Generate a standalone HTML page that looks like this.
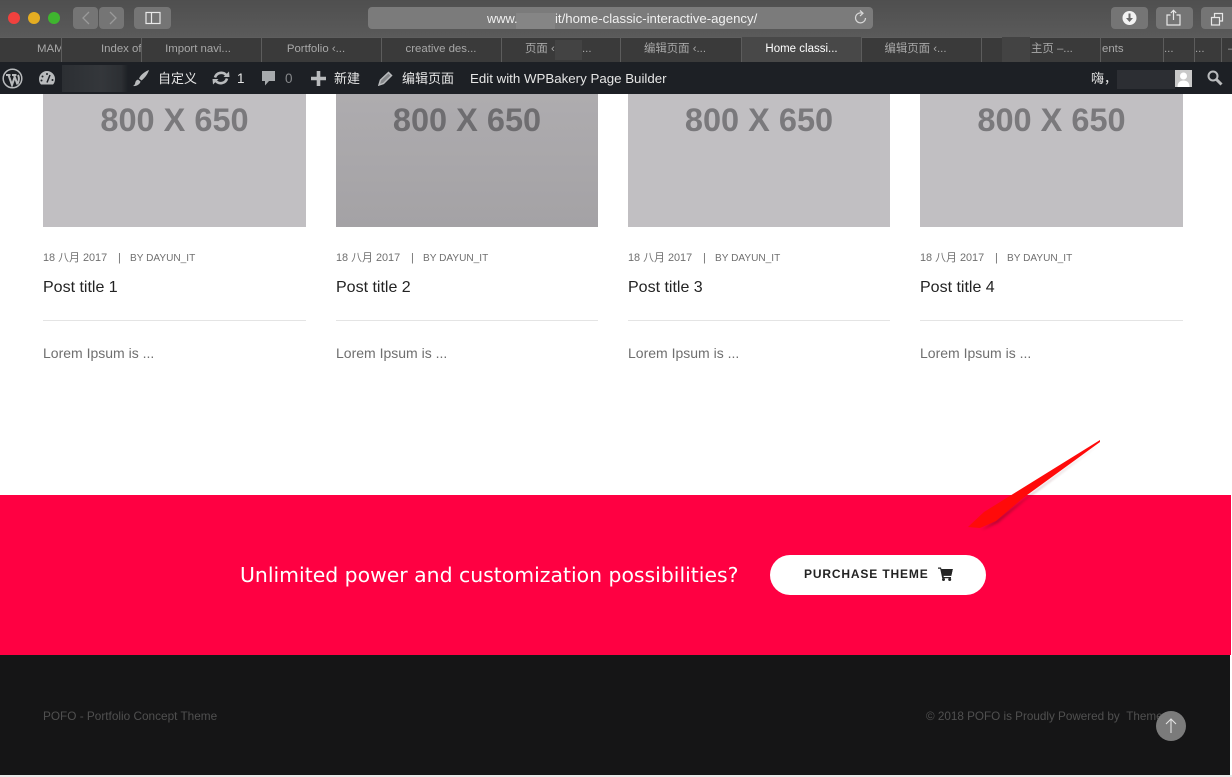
<!DOCTYPE html>
<html lang="zh"><head><meta charset="utf-8"><title>Home Classic Interactive Agency</title>
<style>
*{box-sizing:border-box}
html,body{margin:0;padding:0}
body{width:1232px;height:777px;position:relative;overflow:hidden;background:#fff;font-family:"Liberation Sans","Noto Sans CJK SC",sans-serif}
.a{position:absolute;white-space:nowrap}
.btn{position:absolute;top:7px;height:22px;background:#757575;border-radius:4px}
.tab{position:absolute;top:37px;height:25px;line-height:25px;text-align:center;font-size:11.400px;color:#a8a8a8;border-left:1px solid #5c5c5c;overflow:hidden;white-space:nowrap}
.wp{position:absolute;top:63px;height:32px;line-height:32px;font-size:13px;color:#e6e6e6;white-space:nowrap}
.img{position:absolute;top:94px;width:262px;height:133px;background:#c1bfc2;color:#7a797c;text-align:center;font-weight:bold;font-size:32.500px;line-height:53px;font-family:"Liberation Sans",sans-serif}
.meta{position:absolute;top:251px;font-size:10.900px;color:#6f6f6f;line-height:14px;white-space:nowrap}
.meta span{display:inline-block}
.meta .d{width:75px}
.meta .s{width:12px}
.meta .b{font-size:10.100px}
.title{position:absolute;top:278px;font-size:16px;color:#232323;line-height:20px;white-space:nowrap}
.rule{position:absolute;top:320px;width:262px;height:1px;background:#e4e4e4}
.txt{position:absolute;top:344px;font-size:14px;color:#6f6f6f;line-height:18px;white-space:nowrap}
</style></head><body>

<div class="a" style="left:0;top:0;width:1232px;height:37px;background:linear-gradient(#4f4f4f,#5a5a5a)"></div>
<div class="a" style="left:8px;top:12px;width:12px;height:12px;border-radius:50%;background:#f0413e"></div>
<div class="a" style="left:28px;top:12px;width:12px;height:12px;border-radius:50%;background:#e5ad22"></div>
<div class="a" style="left:48px;top:12px;width:12px;height:12px;border-radius:50%;background:#3fb52f"></div>
<div class="btn" style="left:73px;width:25px"></div>
<div class="btn" style="left:99px;width:25px"></div>
<div class="btn" style="left:134px;width:37px"></div>
<svg class="a" style="left:73px;top:7px" width="100" height="22" fill="none" stroke="#9a9a9a" stroke-width="1.300">
<path d="M16 5 10 11 16 17M37 5 43 11 37 17"/>
<rect x="73" y="5.500" width="14" height="11" stroke="#e8e8e8" stroke-width="1.200"/><path d="M78.500 5.500V16.500" stroke="#e8e8e8" stroke-width="1.200"/>
</svg>
<div class="btn" style="left:368px;width:505px;background:#7b7b7b"></div>
<div class="a" style="left:516px;top:13px;width:39px;height:16px;background:#858585"></div>
<div class="a" style="left:487px;top:11px;font-size:12.800px;line-height:16px;color:#f0f0f0">www.</div>
<div class="a" style="left:555px;top:11px;font-size:13.200px;line-height:16px;color:#f0f0f0">it/home-classic-interactive-agency/</div>
<svg class="a" style="left:853px;top:10px" width="15" height="16" fill="none" stroke="#d8d8d8" stroke-width="1.200"><path d="M9.500 3.300A5 5 0 1 0 12.500 8"/><path d="M7 .5 10 3.300 7 6" /></svg>
<div class="btn" style="left:1111px;width:37px"></div>
<div class="btn" style="left:1156px;width:37px"></div>
<div class="btn" style="left:1201px;width:37px"></div>
<svg class="a" style="left:1111px;top:7px" width="121" height="22">
<circle cx="18.500" cy="11" r="7" fill="#f2f2f2"/><path d="M17.500 6.500h2V11h2.500l-3.500 4-3.500-4h2.500z" fill="#6a6a6a"/>
<path d="M59.500 8H56V18H69V8H65.500M62.500 13V3.500M59.800 6 62.500 3.300 65.200 6" fill="none" stroke="#e8e8e8" stroke-width="1.200"/>
<path d="M100.500 10.500H108.500V18H100.500ZM103.500 10V6.500H111.500V14H109" fill="none" stroke="#e8e8e8" stroke-width="1.200"/>
</svg>

<div class="a" style="left:0;top:37px;width:1232px;height:25px;background:#3a3a3a;border-top:1px solid #5e5e5e"></div>
<div class="tab" style="left:0;width:61px;border:0;text-align:left;padding-left:37px">MAM</div>
<div class="tab" style="left:61px;width:80px;text-align:left;padding-left:39px">Index of</div>
<div class="tab" style="left:141px;width:120px;padding-right:7px">Import navi...</div>
<div class="tab" style="left:261px;width:120px;padding-right:11px">Portfolio ‹...</div>
<div class="tab" style="left:381px;width:120px;padding-right:1px">creative des...</div>
<div class="tab" style="left:501px;width:119px;text-align:left;padding-left:23px">页面 ‹</div>
<div class="a" style="left:555px;top:40px;width:27px;height:20px;background:#434343"></div>
<div class="tab" style="left:582px;width:20px;border:0;background:none;text-align:left">...</div>
<div class="tab" style="left:620px;width:121px;padding-right:12px">编辑页面 ‹...</div>
<div class="tab" style="left:741px;width:120px;background:#484848;color:#fff;font-size:11.500px">Home classi...</div>
<div class="tab" style="left:861px;width:120px;padding-right:12px">编辑页面 ‹...</div>
<div class="tab" style="left:981px;width:119px;text-align:left;padding-left:49px">主页 –...</div>
<div class="a" style="left:1002px;top:37px;width:28px;height:26px;background:#434343"></div>
<div class="tab" style="left:1100px;width:63px;text-align:left;padding-left:1px">ents</div>
<div class="tab" style="left:1163px;width:31px;text-align:left">...</div>
<div class="tab" style="left:1194px;width:28px;text-align:left">...</div>
<div class="tab" style="left:1221px;width:11px;text-align:left;padding-left:6px">–</div>

<div class="a" style="left:0;top:62px;width:1232px;height:32px;background:#1d2025"></div>
<svg class="a" style="left:2px;top:68px" width="21" height="21" fill="none" stroke="#b9bbbd"><circle cx="10.500" cy="10.500" r="9.300" stroke-width="1.500"/><path d="M4 7h4.500M6.500 7l3.500 10 2.500-7.500M10 7h4.500M12 7l3.500 9.500M16 7c1.500 3 1 6-.5 9" stroke-width="2"/></svg>
<svg class="a" style="left:38px;top:70px" width="18" height="16"><path d="M9 1A8 8 0 0 0 1 9c0 2.500.8 4.300 2 5.500h12c1.200-1.200 2-3 2-5.500A8 8 0 0 0 9 1z" fill="#b9bbbd"/><path d="M9 12.500 12 5" stroke="#1d2025" stroke-width="1.500"/><circle cx="9" cy="4" r="1" fill="#1d2025"/><circle cx="4.500" cy="6.500" r="1" fill="#1d2025"/><circle cx="3.500" cy="10.500" r="1" fill="#1d2025"/><circle cx="14.500" cy="10" r="1" fill="#1d2025"/></svg>
<div class="a" style="left:62px;top:65px;width:66px;height:27px;background:linear-gradient(90deg,#2c2f33,#34373b 60%,#2c2f33 90%,#1d2025)"></div>
<svg class="a" style="left:132px;top:69px" width="18" height="18"><path d="M17 1C14 2 9 5 7 9.500L9.500 11.500C13 9 16 4.500 17 1zM6 10.500 8.500 12.500C8 15.500 4 17.500 1 17c1.700-1 2-2 2.300-3.500.3-1.500 1.200-2.500 2.700-3z" fill="#b9bbbd"/></svg>
<div class="wp" style="left:158px">自定义</div>
<svg class="a" style="left:212px;top:70px" width="18" height="16" fill="none" stroke="#b9bbbd" stroke-width="2.600"><path d="M3 7.500A6.500 6.500 0 0 1 14.500 5.500M15 8.500A6.500 6.500 0 0 1 3.500 10.500"/><path d="M11.500 7 17.500 7 17 1.500zM6.500 9 .5 9 1 14.500z" fill="#b9bbbd" stroke="none"/></svg>
<div class="wp" style="left:237px;font-size:13.500px">1</div>
<svg class="a" style="left:261px;top:71px" width="15" height="16"><path d="M1 0H14V10H8L4 14.500V10H1z" fill="#a7aaad"/></svg>
<div class="wp" style="left:285px;color:#85878a;font-size:13.500px">0</div>
<svg class="a" style="left:311px;top:71px" width="15" height="15"><path d="M5.700 0H9.300V5.700H15V9.300H9.300V15H5.700V9.300H0V5.700H5.700z" fill="#b9bbbd"/></svg>
<div class="wp" style="left:334px">新建</div>
<svg class="a" style="left:378px;top:71px" width="15" height="15" fill="#85878a" stroke="#b9bbbd" stroke-width="1.500"><path d="M1 14 2.500 9 10.500 1.500 13.500 4.500 5.500 12.500z"/></svg>
<div class="wp" style="left:402px">编辑页面</div>
<div class="wp" style="left:470px;font-size:13.300px">Edit with WPBakery Page Builder</div>
<div class="wp" style="left:1091px">嗨，</div>
<div class="a" style="left:1117px;top:70px;width:58px;height:19px;background:#2c2e33"></div>
<svg class="a" style="left:1175px;top:70px" width="17" height="17"><rect width="17" height="17" fill="#c9c9c9"/><circle cx="8.500" cy="6" r="3.500" fill="#fff"/><path d="M2.500 17c0-5 3-6.500 6-6.500s6 1.500 6 6.500z" fill="#fff"/></svg>
<svg class="a" style="left:1207px;top:70px" width="16" height="16" fill="none" stroke="#b9bbbd"><circle cx="6" cy="6" r="4.500" stroke-width="2"/><path d="M9.500 9.500 14.500 14.500" stroke-width="3"/></svg>

<div class="img" style="left:43px;width:263px">800 X 650</div>
<div class="img" style="left:336px;background:linear-gradient(#aeacaf,#a4a2a5);color:#6e6d70">800 X 650</div>
<div class="img" style="left:628px">800 X 650</div>
<div class="img" style="left:920px;width:263px">800 X 650</div>

<div class="meta" style="left:43px"><span class="d">18 八月 2017</span><span class="s">|</span><span class="b">BY DAYUN_IT</span></div>
<div class="meta" style="left:336px"><span class="d">18 八月 2017</span><span class="s">|</span><span class="b">BY DAYUN_IT</span></div>
<div class="meta" style="left:628px"><span class="d">18 八月 2017</span><span class="s">|</span><span class="b">BY DAYUN_IT</span></div>
<div class="meta" style="left:920px"><span class="d">18 八月 2017</span><span class="s">|</span><span class="b">BY DAYUN_IT</span></div>
<div class="title" style="left:43px">Post title 1</div>
<div class="title" style="left:336px">Post title 2</div>
<div class="title" style="left:628px">Post title 3</div>
<div class="title" style="left:920px">Post title 4</div>
<div class="rule" style="left:43px;width:263px"></div><div class="rule" style="left:336px"></div><div class="rule" style="left:628px"></div><div class="rule" style="left:920px;width:263px"></div>
<div class="txt" style="left:43px">Lorem Ipsum is ...</div>
<div class="txt" style="left:336px">Lorem Ipsum is ...</div>
<div class="txt" style="left:628px">Lorem Ipsum is ...</div>
<div class="txt" style="left:920px">Lorem Ipsum is ...</div>

<div class="a" style="left:0;top:495px;width:1231px;height:160px;background:#ff0042"></div>
<div class="a" style="left:240px;top:562px;font-family:'DejaVu Sans',sans-serif;font-size:20.400px;line-height:26px;color:#fff">Unlimited power and customization possibilities?</div>
<div class="a" style="left:770px;top:555px;width:216px;height:40px;border-radius:20px;background:#fff"></div>
<div class="a" style="left:804px;top:567px;font-size:12px;line-height:15px;color:#232323;font-weight:bold;letter-spacing:.85px">PURCHASE THEME</div>
<svg class="a" style="left:938px;top:567px" width="15" height="14"><path d="M0 .5H3L3.400 2H14.800L13.300 8.800H5.500L5.800 10H13V11.300H4.200L2.200 1.800H0z" fill="#232323"/><path d="M3.400 2H14.800L13.300 8.800H5z" fill="#232323"/><circle cx="5.500" cy="12.500" r="1.500" fill="#232323"/><circle cx="11.700" cy="12.500" r="1.500" fill="#232323"/></svg>
<svg class="a" style="left:960px;top:435px" width="145" height="100"><path d="M141 8 65 65 38 88 22 95z" fill="#6a1020" opacity=".45" style="filter:blur(1.200px)"/><path d="M8 92 24 77 140 5 140 7 63 63 36 86 20 93z" fill="#ff0a0a"/></svg>

<div class="a" style="left:0;top:655px;width:1230px;height:120px;background:#151516"></div>
<div class="a" style="left:0;top:775px;width:1232px;height:2px;background:#e8e8e8"></div>
<div class="a" style="left:43px;top:708.500px;font-size:11.800px;line-height:15px;color:#505050">POFO - Portfolio Concept Theme</div>
<div class="a" style="left:926px;top:708.500px;font-size:11.700px;line-height:15px;color:#505050">© 2018 POFO is Proudly Powered by &nbsp;Theme</div>
<svg class="a" style="left:1156px;top:711px" width="30" height="30"><circle cx="15" cy="15" r="15" fill="#7b7b7b"/><path d="M15 22V8M10 13 15 8 20 13" fill="none" stroke="#e4e4e4" stroke-width="1.100"/></svg>
</body></html>
